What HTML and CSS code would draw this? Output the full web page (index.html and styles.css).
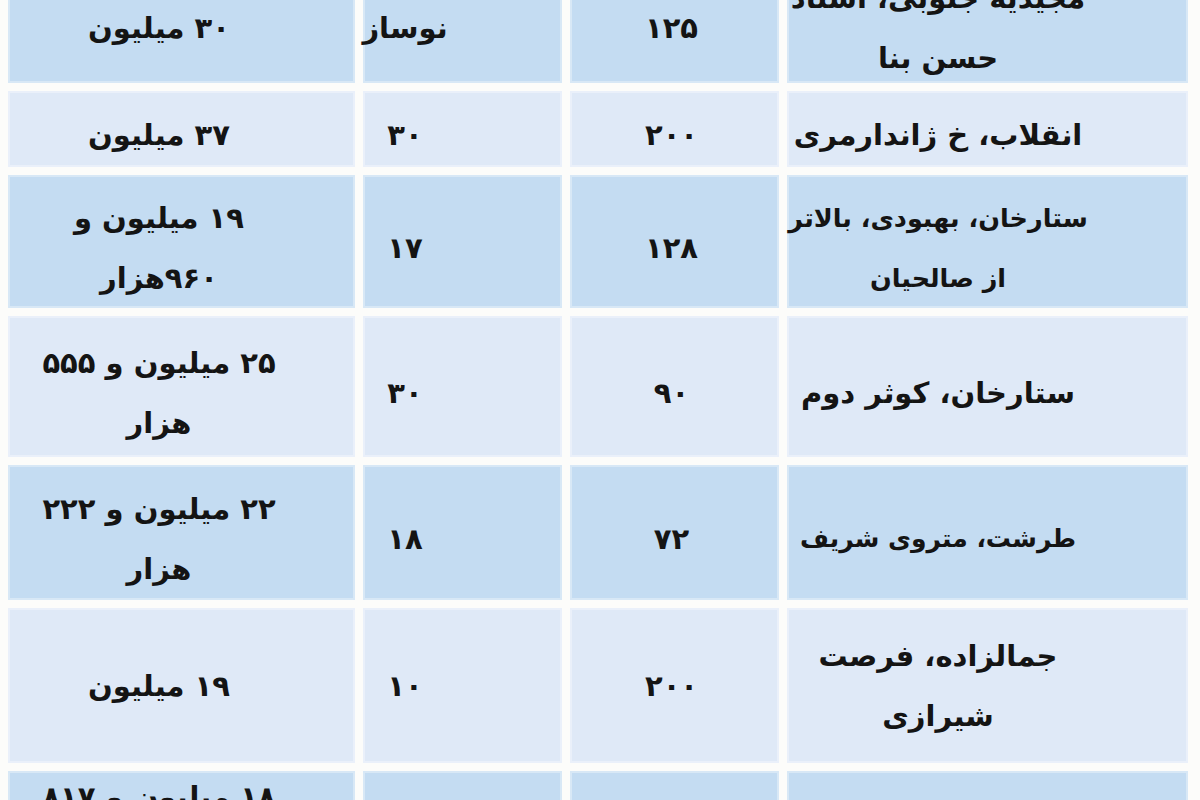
FILE: index.html
```html
<!DOCTYPE html>
<html lang="fa" dir="rtl">
<head>
<meta charset="utf-8">
<title>جدول قیمت</title>
<link rel="stylesheet" href="styles.css">
</head>
<body>
<div class="table">
  <div class="cell blue loc">مجیدیه جنوبی، استاد<br>حسن بنا</div>
  <div class="cell blue area">۱۲۵</div>
  <div class="cell blue age">نوساز</div>
  <div class="cell blue price">۳۰ میلیون</div>

  <div class="cell light loc">انقلاب، خ ژاندارمری</div>
  <div class="cell light area">۲۰۰</div>
  <div class="cell light age">۳۰</div>
  <div class="cell light price">۳۷ میلیون</div>

  <div class="cell blue loc narrow">ستارخان، بهبودی، بالاتر<br>از صالحیان</div>
  <div class="cell blue area">۱۲۸</div>
  <div class="cell blue age">۱۷</div>
  <div class="cell blue price">۱۹ میلیون و<br>۹۶۰هزار</div>

  <div class="cell light loc">ستارخان، کوثر دوم</div>
  <div class="cell light area">۹۰</div>
  <div class="cell light age">۳۰</div>
  <div class="cell light price">۲۵ میلیون و ۵۵۵<br>هزار</div>

  <div class="cell blue loc narrower">طرشت، متروی شریف</div>
  <div class="cell blue area">۷۲</div>
  <div class="cell blue age">۱۸</div>
  <div class="cell blue price">۲۲ میلیون و ۲۲۲<br>هزار</div>

  <div class="cell light loc lift">جمالزاده، فرصت<br>شیرازی</div>
  <div class="cell light area lift">۲۰۰</div>
  <div class="cell light age lift">۱۰</div>
  <div class="cell light price lift">۱۹ میلیون</div>

  <div class="cell blue loc">ستارخان، شادمهر شمالی</div>
  <div class="cell blue area">۸۵</div>
  <div class="cell blue age">۵</div>
  <div class="cell blue price">۱۸ میلیون و ۸۱۷<br>هزار</div>
</div>
</body>
</html>
```

FILE: styles.css
```css
html, body {
  margin: 0;
  padding: 0;
  background: #fcfcfa;
  overflow: hidden;
  height: 800px;
}

.table {
  display: grid;
  grid-template-columns: 401px 209px 199px 347px;
  grid-template-rows: 123px 76px 133px 141px 135px 155px 100px;
  column-gap: 8px;
  row-gap: 8px;
  margin-top: -40px;
  margin-right: 12px;
  width: 1180px;
  font-family: "DejaVu Sans", sans-serif;
  font-weight: bold;
  font-size: 29px;
  line-height: 60px;
  color: #141414;
}

.cell {
  display: flex;
  align-items: center;
  justify-content: center;
  text-align: center;
  white-space: nowrap;
  box-sizing: border-box;
  padding-top: 12px;
  box-shadow: inset 0 0 0 2px rgba(255, 255, 255, 0.35);
}

.blue {
  background: #c4dcf2;
}

.light {
  background: #dfe9f7;
}

.price {
  padding-right: 45px;
}

.age {
  padding-right: 115px;
}

.area {
  padding-right: 6px;
}

.loc {
  padding-right: 99px;
}

.narrow {
  font-size: 25.5px;
}

.narrower {
  font-size: 25px;
}

.cell.lift {
  padding-top: 0;
}
```
